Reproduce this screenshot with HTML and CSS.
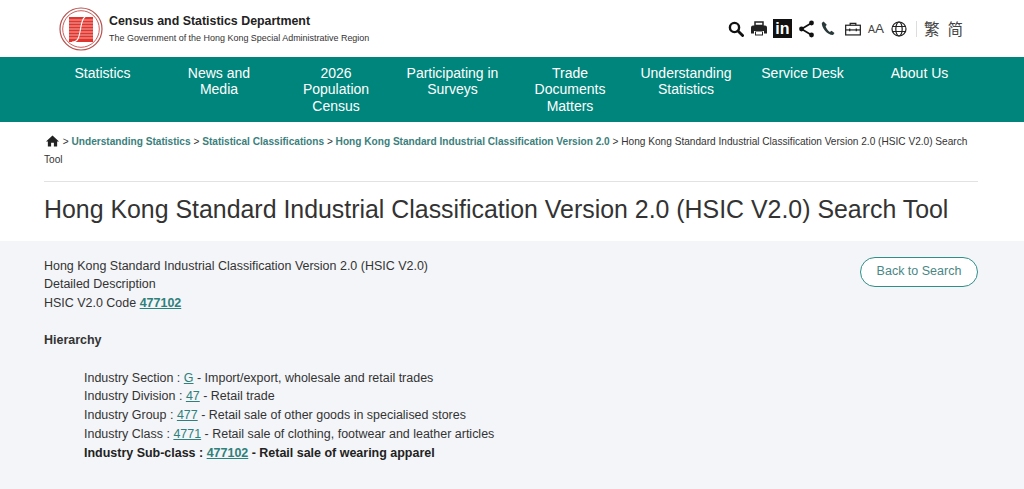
FILE: index.html
```html
<!DOCTYPE html>
<html lang="en">
<head>
<meta charset="utf-8">
<title>HSIC V2.0 Search Tool</title>
<link rel="stylesheet" href="styles.css">
</head>
<body>
<header class="top">
  <div class="brand">
    <svg class="logo" viewBox="0 0 44 44" width="44" height="44">
      <circle cx="22" cy="22" r="21" fill="#fff" stroke="#b5504c" stroke-width="1.2"/>
      <circle cx="22" cy="22" r="18.3" fill="#fff" stroke="#c9605c" stroke-width="1"/>
      <rect x="10" y="10" width="24" height="25" fill="#e0352f"/>
      <g stroke="#f6b5b0" stroke-width="0.9"><path d="M10 13h24M10 16h24M10 19h24M10 22h24M10 25h24M10 28h24M10 31h24"/></g>
      <path d="M13 35c6 0 7-4 8.500-13s3-14 10-14" fill="none" stroke="#fff" stroke-width="1.1"/>
    </svg>
    <div class="brand-text">
      <div class="brand-name">Census and Statistics Department</div>
      <div class="brand-sub">The Government of the Hong Kong Special Administrative Region</div>
    </div>
  </div>
  <div class="tools">
    <svg class="ic" viewBox="0 0 16 16" width="16" height="16"><circle cx="6.500" cy="6.500" r="4.600" fill="none" stroke="#111" stroke-width="2.400"/><path d="M10 10l4.600 4.600" stroke="#111" stroke-width="2.800" stroke-linecap="round"/></svg>
    <svg class="ic mx" viewBox="0 0 16 15" width="16" height="15"><path d="M4 1h8v3.500H4z" fill="none" stroke="#222" stroke-width="1.500"/><path d="M2 4.500h12a2 2 0 0 1 2 2v6h-3V10H3v2.500H0v-6a2 2 0 0 1 2-2z" fill="#222"/><path d="M4 10.500h8v4H4z" fill="#222"/><path d="M5 11h6v2.500H5z" fill="#fff"/></svg>
    <span class="li">in</span>
    <svg class="ic mx" viewBox="0 0 15 18" width="15" height="18"><path d="M12.500 3L2.500 9l10 6" fill="none" stroke="#111" stroke-width="1.700"/><circle cx="12.500" cy="3" r="2.400" fill="#111"/><circle cx="2.500" cy="9" r="2.400" fill="#111"/><circle cx="12.500" cy="15" r="2.400" fill="#111"/></svg>
    <svg class="ic mx" viewBox="0 0 14 15" width="14" height="15"><path d="M2.500 .5L.8 2C.5 6.500 6 14 12 14l1.500-2-3-2.300-1.600 1.200C7.300 10 5 7 4.600 5.200L5.800 3.700z" fill="#2a3a3a"/></svg>
    <svg class="ic mxx" viewBox="0 0 17 14" width="16" height="14"><path d="M5.500 3V1h6v2" fill="none" stroke="#222" stroke-width="1.300"/><rect x=".7" y="3" width="15.600" height="10.300" fill="none" stroke="#222" stroke-width="1.300"/><path d="M1 8h15" stroke="#222" stroke-width="1.300"/><path d="M5 6.500v3M12 6.500v3" stroke="#222" stroke-width="1.300"/></svg>
    <span class="aa"><span class="aa-s">A</span>A</span>
    <svg class="ic mx" viewBox="0 0 16 16" width="16" height="16"><g fill="none" stroke="#222" stroke-width="1.200"><circle cx="8" cy="8" r="7"/><ellipse cx="8" cy="8" rx="3.200" ry="7"/><path d="M1.500 5.500h13M1.500 10.500h13"/></g></svg>
    <span class="sep"></span>
    <span class="lang">繁</span>
    <span class="lang">简</span>
  </div>
</header>
<nav class="nav">
  <a class="nav-i w1">Statistics</a>
  <a class="nav-i w2">News and Media</a>
  <a class="nav-i w3">2026 Population Census</a>
  <a class="nav-i w4">Participating in Surveys</a>
  <a class="nav-i w5">Trade Documents Matters</a>
  <a class="nav-i w6">Understanding Statistics</a>
  <a class="nav-i w7">Service Desk</a>
  <a class="nav-i w8">About Us</a>
</nav>
<section class="head">
  <div class="crumbs"><svg class="home" viewBox="0 0 14 12" width="14" height="12"><path d="M7 0L0 6.500h2V12h3.500V8h3v4H12V6.500h2z" fill="#222"/></svg> &gt; <a>Understanding Statistics</a> &gt; <a>Statistical Classifications</a> &gt; <a>Hong Kong Standard Industrial Classification Version 2.0</a> &gt; Hong Kong Standard Industrial Classification Version 2.0 (HSIC V2.0) Search Tool</div>
  <h1 class="title">Hong Kong Standard Industrial Classification Version 2.0 (HSIC V2.0) Search Tool</h1>
</section>
<main class="main">
  <div class="row">
    <div>
      <div class="ln">Hong Kong Standard Industrial Classification Version 2.0 (HSIC V2.0)</div>
      <div class="ln">Detailed Description</div>
      <div class="ln">HSIC V2.0 Code <a class="code">477102</a></div>
    </div>
    <a class="back">Back to Search</a>
  </div>
  <div class="ln hier">Hierarchy</div>
  <div class="tree">
    <div class="ln">Industry Section : <a class="lnk">G</a> - Import/export, wholesale and retail trades</div>
    <div class="ln">Industry Division : <a class="lnk">47</a> - Retail trade</div>
    <div class="ln">Industry Group : <a class="lnk">477</a> - Retail sale of other goods in specialised stores</div>
    <div class="ln">Industry Class : <a class="lnk">4771</a> - Retail sale of clothing, footwear and leather articles</div>
    <div class="ln cur">Industry Sub-class : <a class="code">477102</a> - Retail sale of wearing apparel</div>
  </div>
</main>
</body>
</html>
```
FILE: styles.css
```css
* { box-sizing: border-box; }
html, body { margin: 0; padding: 0; }
body { font-family: "Liberation Sans", Arial, sans-serif; color: #333; background: #f3f5f8; height: 489px; overflow: hidden; }
.top { height: 57px; background: #fff; display: flex; align-items: center; justify-content: space-between; padding: 0 60px 0 59px; }
.brand { display: flex; align-items: center; gap: 6px; }
.logo { display: block; }
.brand-name { font-size: 12.4px; font-weight: 700; color: #222; line-height: 16px; }
.brand-sub { font-size: 8.960px; color: #333; line-height: 13px; margin-top: 3px; }
.tools { display: flex; align-items: center; gap: 6px; }
.ic { display: block; }
.mx { margin-left: 1px; }
.mxx { margin-left: 4px; }
.li { width: 19px; height: 19px; background: #111; color: #fff; font-weight: 700; font-size: 16px; line-height: 20px; text-align: center; }
.aa { font-size: 13.500px; color: #444; width: 16px; margin-left: 1px; white-space: nowrap; }
.aa-s { font-size: 10.500px; }
.sep { width: 1px; height: 16px; background: #ddd; margin: 0 0 0 3px; }
.lang { font-family: "Noto Sans CJK TC", sans-serif; font-size: 15.500px; color: #444; margin: -2px 1px 0; line-height: 20px; }
.lang + .lang { margin-left: 1px; }
.nav { height: 65px; background: #00857c; display: flex; padding-left: 52px; }
.nav-i { color: #fff; font-size: 14px; line-height: 16.300px; text-align: center; padding-top: 8px; display: block; }
.w1 { width: 101px; } .w2 { width: 132px; padding-left: 31px; padding-right: 31px; } .w3 { width: 102px; padding-left: 14px; padding-right: 14px; }
.w4 { width: 131px; padding-left: 6px; padding-right: 6px; } .w5 { width: 104px; padding-left: 14px; padding-right: 14px; } .w6 { width: 126px; padding-left: 15px; padding-right: 13px; }
.w7 { width: 109px; } .w8 { width: 125px; }
.head { background: #fff; height: 119px; padding: 10.500px 46px 0 44px; }
.crumbs { font-size: 10.120px; line-height: 18.500px; color: #333; padding-bottom: 11.500px; border-bottom: 1px solid #e2e2e2; }
.crumbs a { color: #3a807c; font-weight: 700; }
.home { vertical-align: -2px; margin-left: 2px; margin-right: 1px; width: 13px; }
.title { margin: 12px 0 0; font-size: 24.900px; font-weight: 400; line-height: 30px; color: #333; white-space: nowrap; }
.main { padding: 15.500px 46px 0 44px; }
.row { display: flex; justify-content: space-between; align-items: flex-start; }
.ln { font-size: 12.470px; line-height: 18.750px; color: #333; }
.code { color: #2f7f7a; font-weight: 700; text-decoration: underline; }
.lnk { color: #2f7f7a; text-decoration: underline; }
.back { width: 118px; height: 30px; border: 1px solid #2f8f88; border-radius: 15px; background: #fff; color: #4a8784; font-size: 12.500px; line-height: 26px; text-align: center; margin-top: .500px; }
.hier { font-weight: 700; margin-top: 18.250px; }
.tree { padding-left: 40px; margin-top: 18.750px; }
.cur { font-weight: 700; color: #222; }
```
